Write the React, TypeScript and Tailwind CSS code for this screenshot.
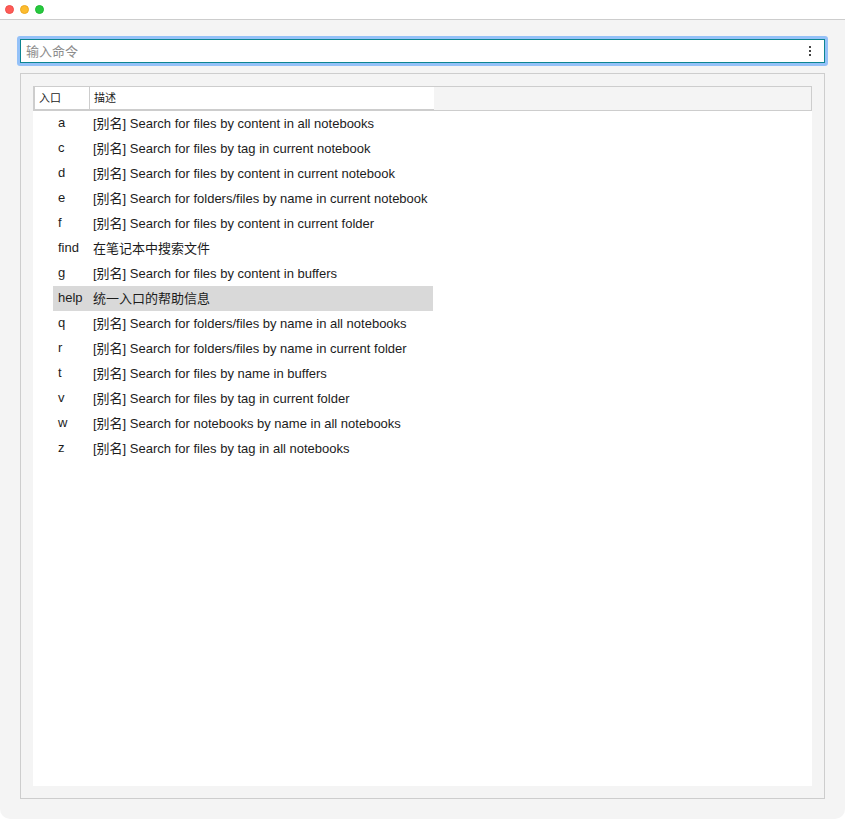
const entries = [
  { name: "a", description: "[别名] Search for files by content in all notebooks" },
  { name: "c", description: "[别名] Search for files by tag in current notebook" },
  { name: "d", description: "[别名] Search for files by content in current notebook" },
  { name: "e", description: "[别名] Search for folders/files by name in current notebook" },
  { name: "f", description: "[别名] Search for files by content in current folder" },
  { name: "find", description: "在笔记本中搜索文件" },
  { name: "g", description: "[别名] Search for files by content in buffers" },
  { name: "help", description: "统一入口的帮助信息", selected: true },
  { name: "q", description: "[别名] Search for folders/files by name in all notebooks" },
  { name: "r", description: "[别名] Search for folders/files by name in current folder" },
  { name: "t", description: "[别名] Search for files by name in buffers" },
  { name: "v", description: "[别名] Search for files by tag in current folder" },
  { name: "w", description: "[别名] Search for notebooks by name in all notebooks" },
  { name: "z", description: "[别名] Search for files by tag in all notebooks" },
];

function TitleBar() {
  return (
    <header className="flex h-5 shrink-0 items-center gap-[6px] border-b border-[#cdcdcd] bg-white px-[5px]">
      <button aria-label="Close" className="size-[9px] rounded-full border border-[#ee4f4a] bg-[#ff5b57]" />
      <button aria-label="Minimize" className="size-[9px] rounded-full border border-[#eda920] bg-[#fdbc2e]" />
      <button aria-label="Zoom" className="size-[9px] rounded-full border border-[#1cb932] bg-[#27c93f]" />
    </header>
  );
}

function CommandInput() {
  return (
    <div className="rounded-[3px] bg-[#94c1f8] p-[3px]">
      <div className="flex h-6 items-center border border-[#0c8591] bg-white pr-2 pl-[5px]">
        <input
          type="text"
          aria-label="输入命令"
          placeholder="输入命令"
          className="h-full min-w-0 flex-1 bg-transparent text-[13px] outline-none placeholder:text-[#8c8c8c]"
        />
        <button aria-label="Menu" className="flex size-3 items-center justify-center">
          <svg viewBox="0 0 12 12" className="size-3" fill="#444" shapeRendering="crispEdges" aria-hidden="true">
            <rect x="5" y="1" width="2" height="2" />
            <rect x="5" y="5" width="2" height="2" />
            <rect x="5" y="9" width="2" height="2" />
          </svg>
        </button>
      </div>
    </div>
  );
}

function EntryTable() {
  return (
    <table className="w-full table-fixed border-separate border-spacing-0 text-left">
      <colgroup>
        <col className="w-[57px]" />
        <col className="w-[344px]" />
        <col />
      </colgroup>
      <thead>
        <tr className="h-[25px] text-[11px] leading-4">
          <th className="border-t border-r border-b-2 border-l-2 border-[#cdcdcd] p-0 pl-1 font-normal">入口</th>
          <th className="border-t border-b-2 border-[#cdcdcd] p-0 pl-1 font-normal">描述</th>
          <td className="border-y border-r border-[#cdcdcd] bg-[#f4f4f4] p-0" />
        </tr>
      </thead>
      <tbody>
        {entries.map((entry) => (
          <tr key={entry.name} className="text-[13px] leading-[25px]">
            <td className="p-0">
              <div className={`ml-5 h-[25px] pl-[5px] leading-[23px] ${entry.selected ? "bg-[#d9d9d9]" : ""}`}>
                {entry.name}
              </div>
            </td>
            <td className="p-0">
              <div className={`mr-px h-[25px] pl-[3px] whitespace-nowrap ${entry.selected ? "bg-[#d9d9d9]" : ""}`}>
                {entry.description}
              </div>
            </td>
            <td className="p-0" />
          </tr>
        ))}
      </tbody>
    </table>
  );
}

export default function App() {
  return (
    <div className="min-h-screen bg-white font-['Liberation_Sans','Noto_Sans_CJK_SC',sans-serif] text-[#1c1c1c]">
      <div className="flex min-h-screen flex-col overflow-hidden rounded-b-[10px] bg-[#f4f4f4]">
        <TitleBar />
        <main className="flex flex-1 flex-col gap-[7px] pt-4 pb-5">
          <div className="px-[17px]">
            <CommandInput />
          </div>
          <section className="mx-5 flex flex-1 flex-col border border-[#cdcdcd] p-3">
            <div className="flex-1 bg-white">
              <EntryTable />
            </div>
          </section>
        </main>
      </div>
    </div>
  );
}
